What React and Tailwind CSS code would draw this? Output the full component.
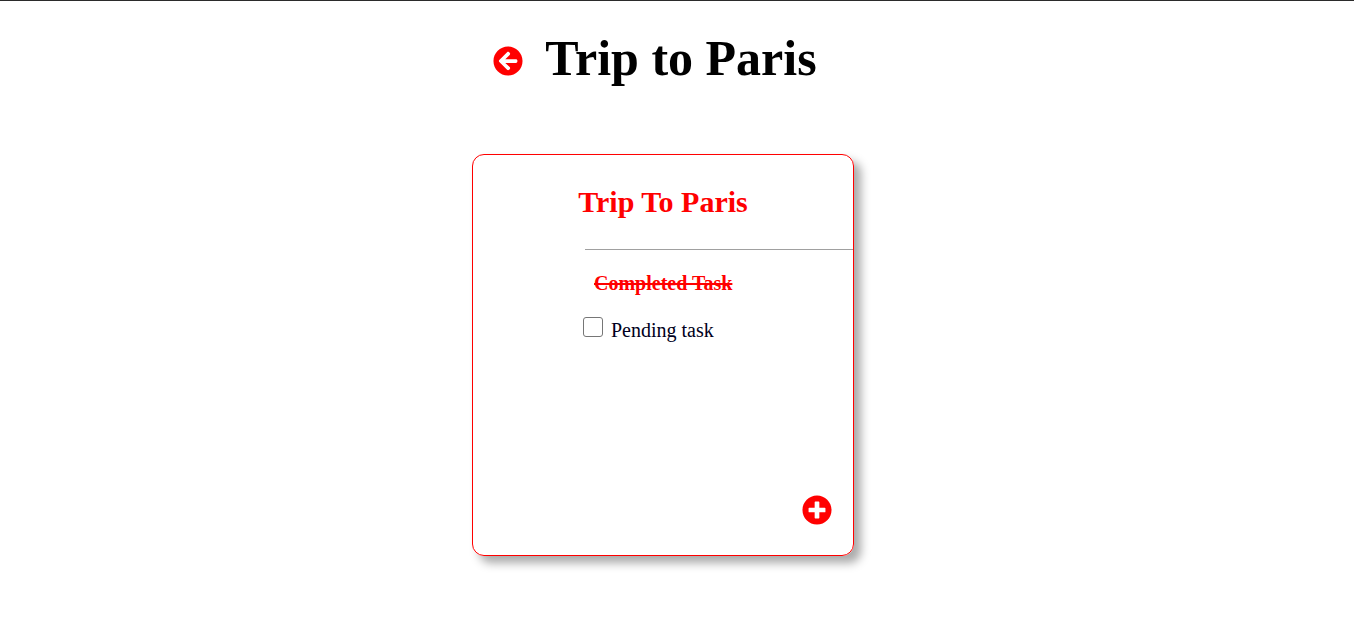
import React from 'react';
import { FaArrowCircleLeft, FaPlusCircle } from 'react-icons/fa';

const App = () => {
  return (
    <div className="min-h-[626px] bg-white pr-[28px] font-['Liberation_Serif',serif] text-black">
      <div className="-mr-[28px] h-px bg-[#2b2b2b]" />

      {/* Page heading */}
      <div className="flex items-center justify-center gap-[22px] pr-[16px] pt-[30px]">
        <FaArrowCircleLeft className="mt-[4px] text-[30px] text-[#ff0000]" />
        <h1 className="text-[50px] font-bold leading-[55px]">Trip to Paris</h1>
      </div>

      {/* List card */}
      <div className="mx-auto mt-[68px] flex h-[402px] w-[382px] flex-col rounded-[12px] border border-[#ff0000] shadow-[7px_7px_10px_#aaaaaa]">
        <h2 className="mt-[30px] text-center text-[30px] font-bold leading-[34px] text-[#ff0000]">Trip To Paris</h2>
        <div className="ml-[112px] mt-[30px] h-px bg-[#a0a0a0]" />

        <p className="ml-[121px] mt-[22px] text-[20px] font-bold leading-[23px] text-[#ff0000] line-through">Completed Task</p>

        <label className="ml-[110px] mt-[22px] flex items-start text-[20px] leading-[23px] text-[#000020]">
          <span className="h-[20px] w-[20px] rounded-[3px] border border-[#767676] bg-white" />
          <span className="ml-[8px] mt-[2px]">Pending task</span>
        </label>

        <div className="mt-auto flex justify-end pb-[30px] pr-[21px]">
          <FaPlusCircle className="text-[30px] text-[#ff0000]" />
        </div>
      </div>
    </div>
  );
};

export default App;
